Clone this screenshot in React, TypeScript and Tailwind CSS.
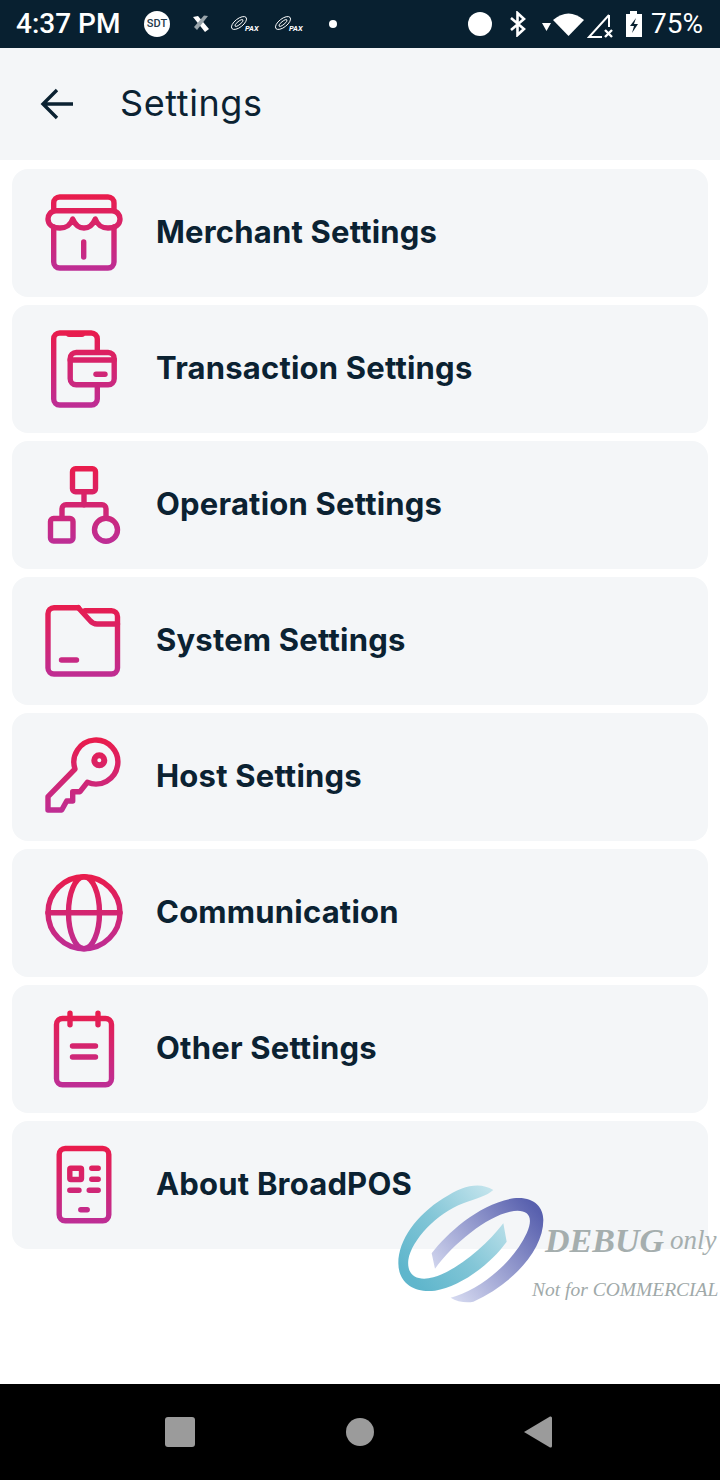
import type { ReactNode } from "react";

function IconFrame({ id, children }: { readonly id: string; readonly children: ReactNode }) {
  return (
    <svg width="88" height="88" viewBox="0 0 88 88" fill="none" stroke={`url(#${id})`} strokeWidth="5.4" strokeLinecap="round" strokeLinejoin="round" aria-hidden className="shrink-0">
      <defs>
        <linearGradient id={id} gradientUnits="userSpaceOnUse" x1="44" y1="6" x2="44" y2="82">
          <stop offset="0" stopColor="#e91c4c" />
          <stop offset="1" stopColor="#bd2e96" />
        </linearGradient>
      </defs>
      {children}
    </svg>
  );
}

const rows: { label: string; icon: ReactNode }[] = [
  {
    label: "Merchant Settings",
    icon: (
      <IconFrame id="g1">
        <path d="M13.7 21V14a6 6 0 0 1 6-6H68a6 6 0 0 1 6 6v7" />
        <path d="M16 21.7H72C77 21.7 80 26 80 30C80 35 76 39 68 39C62 39 57 35.5 55.3 30C53 35.5 49 39 44 39C39 39 35 35.5 32.7 30C31 35.5 26 39 20 39C12 39 8 35 8 30C8 26 11 21.7 16 21.7Z" />
        <path d="M13.7 38V73a6 6 0 0 0 6 6H68a6 6 0 0 0 6-6V38" />
        <path d="M43.7 53V68" />
      </IconFrame>
    ),
  },
  {
    label: "Transaction Settings",
    icon: (
      <IconFrame id="g2">
        <path d="M57.3 25V14a6 6 0 0 0-6-6H19.7a6 6 0 0 0-6 6V74a6 6 0 0 0 6 6H51.3a6 6 0 0 0 6-6V60" />
        <path d="M29 9H42" strokeWidth="6" />
        <rect x="30.2" y="27.5" width="44" height="32.3" rx="6" />
        <path d="M30.2 35H74.2" />
        <path d="M56 49.3H65" />
      </IconFrame>
    ),
  },
  {
    label: "Operation Settings",
    icon: (
      <IconFrame id="g3">
        <rect x="32.5" y="7.8" width="23" height="23" rx="3" />
        <path d="M44 31V43.7" />
        <path d="M22 55V47.7a4 4 0 0 1 4-4H62a4 4 0 0 1 4 4V56" />
        <rect x="10.5" y="57.5" width="22.5" height="22.5" rx="3" />
        <circle cx="66" cy="68.7" r="11.5" />
      </IconFrame>
    ),
  },
  {
    label: "System Settings",
    icon: (
      <IconFrame id="g4">
        <path d="M38.3 10.7H14a6 6 0 0 0-6 6V71a6 6 0 0 0 6 6H71.5a6 6 0 0 0 6-6V19.7a6 6 0 0 0-6-6H45" />
        <path d="M38.3 10.7L50 23.5Q53 27 57 27H77.5" />
        <path d="M21.5 63H36.5" />
      </IconFrame>
    ),
  },
  {
    label: "Host Settings",
    icon: (
      <IconFrame id="g5">
        <path d="M47.3 49.3A22 22 0 1 0 35 36L8 63.7V77H21.7L26.7 68H32.7V58.7H40L47.3 49.3Z" />
        <circle cx="59.3" cy="27.3" r="5" strokeWidth="6" />
      </IconFrame>
    ),
  },
  {
    label: "Communication",
    icon: (
      <IconFrame id="g6">
        <circle cx="44" cy="43.7" r="36" />
        <ellipse cx="44" cy="43.7" rx="15.5" ry="36" />
        <path d="M8 43.7H80" />
      </IconFrame>
    ),
  },
  {
    label: "Other Settings",
    icon: (
      <IconFrame id="g7">
        <rect x="16.5" y="13.5" width="55" height="66.3" rx="6" />
        <path d="M30 8.2V19.8M58 8.2V19.8" />
        <path d="M32.5 41H55.5M32.5 52H55.5" />
      </IconFrame>
    ),
  },
  {
    label: "About BroadPOS",
    icon: (
      <IconFrame id="g8">
        <rect x="19.2" y="7.5" width="49.6" height="72.3" rx="6" />
        <rect x="29.8" y="27.2" width="11.7" height="11.3" rx="1" />
        <path d="M51.8 27.3H58.2M51.8 38.3H58.2" />
        <path d="M29.8 49.3H39M49.2 49.3H58.2" />
        <path d="M40.8 68.7H47.2" />
      </IconFrame>
    ),
  },
];

function PaxLogo() {
  return (
    <svg width="32" height="20" viewBox="0 0 32 20" aria-hidden className="shrink-0">
      <g fill="none" stroke="#fff" strokeWidth="0.9" transform="rotate(-38 9 9)">
        <ellipse cx="9" cy="9" rx="9" ry="4.2" />
        <ellipse cx="9" cy="9" rx="5" ry="1.6" />
      </g>
      <text x="15" y="17" fill="#fff" fontSize="7.5" fontWeight="700" fontStyle="italic" fontFamily="Roboto, sans-serif">PAX</text>
    </svg>
  );
}

function StatusBar() {
  return (
    <div className="flex h-12 shrink-0 items-center bg-[#082030] pl-4 text-white [font-family:Roboto,sans-serif]">
      <span className="w-[104px] whitespace-nowrap text-[28px] font-medium leading-none">4:37 PM</span>
      <span className="ml-6 flex size-[26px] items-center justify-center rounded-full bg-white text-[11px] font-medium text-[#23394a]">SDT</span>
      <svg width="20" height="18" viewBox="0 0 20 18" className="ml-[21px]" aria-hidden>
        <path d="M2 2L7 1L18 14L14 17Z" fill="#fff" />
        <path d="M17 1L13 0.5L3 12L6 15Z" fill="#9aa5ab" />
      </svg>
      <div className="ml-[19px] flex items-center gap-3">
        <PaxLogo />
        <PaxLogo />
      </div>
      <span className="ml-[23px] size-2 rounded-full bg-white" />
      <span className="ml-[131px] size-6 rounded-full bg-white" />
      <svg width="18" height="26" viewBox="0 0 18 26" className="ml-[17px]" fill="none" stroke="#fff" strokeWidth="2.6" aria-hidden>
        <path d="M2 7L15 18L8.5 24V2L15 8L2 19" />
      </svg>
      <svg width="10" height="10" viewBox="0 0 10 10" className="ml-[15px] mt-[6px]" fill="#fff" aria-hidden>
        <path d="M0 1H9L4.5 9Z" />
      </svg>
      <svg width="31" height="24" viewBox="0 0 31 24" className="ml-[1px]" fill="#fff" aria-hidden>
        <path d="M0 8Q15.5 -5 31 8L15.5 24Z" />
      </svg>
      <svg width="26" height="26" viewBox="0 0 26 26" className="ml-[3px] mt-1" fill="none" stroke="#fff" strokeWidth="2" aria-hidden>
        <path d="M22 2V14M22 2L2 24H15" />
        <path d="M18 17L25 24M25 17L18 24" strokeWidth="2.4" />
      </svg>
      <svg width="18" height="28" viewBox="0 0 18 28" className="ml-[12px]" aria-hidden>
        <path d="M5 1H12V4H17V27H1V4H5Z" fill="#fff" />
        <path d="M11 8L5 16H9L7 23L13 14H9Z" fill="#082030" />
      </svg>
      <span className="ml-[8px] text-[28px] leading-none">75%</span>
    </div>
  );
}

function Watermark() {
  return (
    <div className="pointer-events-none absolute left-[380px] top-[1170px] h-[150px] w-[340px] [font-family:'Liberation_Serif',serif] italic">
      <svg width="340" height="150" viewBox="0 0 1020 450" aria-hidden>
        <defs>
          <linearGradient id="teal" gradientUnits="userSpaceOnUse" x1="90" y1="320" x2="370" y2="80">
            <stop offset="0" stopColor="#5fb6cc" />
            <stop offset="0.45" stopColor="#83c6d7" />
            <stop offset="1" stopColor="#c8e6ee" />
          </linearGradient>
          <linearGradient id="violet" gradientUnits="userSpaceOnUse" x1="190" y1="370" x2="480" y2="130">
            <stop offset="0" stopColor="#d9ddf2" />
            <stop offset="1" stopColor="#5860ae" />
          </linearGradient>
        </defs>
        <path d="M340 60C300 35 250 45 190 85C110 135 55 210 55 280C55 340 105 370 165 362C240 350 330 285 380 215L370 160C320 225 235 300 160 322C110 335 80 315 85 270C95 210 170 130 250 100C290 85 320 78 340 60Z" fill="url(#teal)" />
        <path d="M155 250C200 190 300 100 400 85C460 78 490 110 490 150C490 240 400 340 280 395C260 400 230 395 212 383C290 365 400 280 440 190C465 135 440 115 390 125C320 140 220 220 165 296Z" fill="url(#violet)" />
      </svg>
      <span className="absolute left-[165px] top-[54px] whitespace-nowrap text-[34px] font-bold leading-none text-[#a5aeae]">DEBUG</span>
      <span className="absolute left-[290px] top-[57px] whitespace-nowrap text-[27px] leading-none text-[#a5aeae]">only</span>
      <span className="absolute left-[152px] top-[110px] whitespace-nowrap text-[19.5px] leading-none text-[#a0a9a9]">Not for COMMERCIAL</span>
    </div>
  );
}

export default function App() {
  return (
    <div className="relative flex h-[1480px] w-[720px] flex-col overflow-hidden bg-white text-[#0b2232] [font-family:Inter,sans-serif]">
      <StatusBar />
      <header className="flex h-28 shrink-0 items-center bg-[#f4f6f8] pl-10">
        <svg width="34" height="32" viewBox="0 0 34 32" fill="none" stroke="#0b2232" strokeWidth="3.4" aria-hidden>
          <path d="M33 16H3M17 2L3 16L17 30" />
        </svg>
        <h1 className="ml-[46px] -mt-[2px] text-[36px] font-normal leading-none tracking-[0.6px]">Settings</h1>
      </header>
      <main className="flex flex-col gap-2 px-3 pt-[9px]">
        {rows.map((row) => (
          <div key={row.label} className="flex h-32 items-center rounded-2xl bg-[#f4f6f8] pl-7">
            {row.icon}
            <span className="ml-7 -mt-1 text-[31px] font-bold leading-none tracking-[0.2px]">{row.label}</span>
          </div>
        ))}
      </main>
      <nav className="mt-auto flex h-24 shrink-0 items-center justify-center gap-[150px] bg-black pr-[4px]">
        <span className="size-[30px] rounded-[3px] bg-[#9b9b9b]" />
        <span className="ml-[1px] size-7 rounded-full bg-[#9b9b9b]" />
        <svg width="28" height="32" viewBox="0 0 28 32" fill="#9b9b9b" aria-hidden>
          <path d="M0 16L26 0.5Q28 0 28 2V30Q28 32 26 31.5Z" />
        </svg>
      </nav>
      <Watermark />
    </div>
  );
}
